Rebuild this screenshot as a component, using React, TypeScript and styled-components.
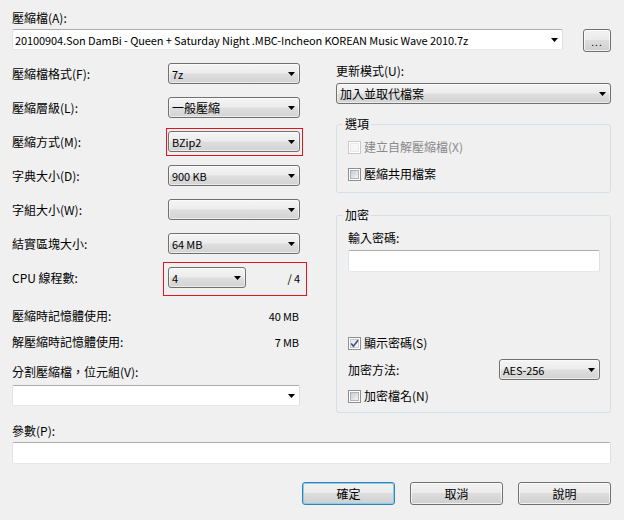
import styled, {createGlobalStyle, css} from 'styled-components';

const GlobalStyle = createGlobalStyle`
   html, body {
      margin: 0;
      padding: 0;
      background: #f0f0f0;
   }
   body {
      font-family: "Noto Sans CJK TC", "Liberation Sans", sans-serif;
      font-size: 12px;
      color: #000;
   }
   * {
      box-sizing: border-box;
   }
`;

const isLatin = (text: string) => /^[\x00-\x7f]*$/.test(text);

const Dialog = styled.div`
   width: 624px;
   height: 520px;
   padding: 10px 13px 0 12px;
   display: flex;
   flex-direction: column;
`;
const Label = styled.div<{$gap?: number}>`
   line-height: 16px;
   white-space: nowrap;
   margin-top: ${p => p.$gap ?? 0}px;
`;
const Value = styled.span<{$latin?: boolean}>`
   line-height: 16px;
   white-space: nowrap;
   ${p =>
      p.$latin &&
      css`
         font-size: 11px;
         letter-spacing: -0.1px;
      `}
`;
const ArchiveRow = styled.div`
   display: flex;
   align-items: flex-start;
   gap: 20px;
   margin-top: 3px;
`;
const Select = styled.div<{$editable?: boolean; $width?: number; $gap?: number; $grow?: boolean}>`
   height: 21px;
   flex: ${p => (p.$grow ? '1 1 auto' : 'none')};
   width: ${p => (p.$width ? `${p.$width}px` : 'auto')};
   display: flex;
   align-items: center;
   padding: 0 4px 0 3px;
   margin-top: ${p => p.$gap ?? 0}px;
   border: 1px solid #707070;
   border-radius: 3px;
   background: linear-gradient(#f5f5f5 0%, #ececec 48%, #dedede 52%, #d3d3d3 100%);
   box-shadow: inset 0 0 0 1px rgba(255, 255, 255, 0.55);
   ${p =>
      p.$editable &&
      css`
         background: #fff;
         border-color: #abadb3 #dbdfe6 #e3e9ef #e2e3ea;
         border-radius: 2px;
         box-shadow: none;
         padding-left: 2px;
      `}
`;
const SelectText = styled(Value)`
   flex: 1;
   overflow: hidden;
`;
const TextBox = styled.div<{$gap?: number}>`
   height: 22px;
   flex: none;
   margin-top: ${p => p.$gap ?? 0}px;
   background: #fff;
   border: 1px solid;
   border-color: #abadb3 #dbdfe6 #e3e9ef #e2e3ea;
   border-radius: 2px;
`;
const Button = styled.button<{$default?: boolean}>`
   font: inherit;
   color: #000;
   height: 23px;
   border: 1px solid #707070;
   border-radius: 3px;
   background: linear-gradient(#f2f2f2 0%, #ebebeb 45%, #dddddd 50%, #cfcfcf 100%);
   box-shadow: inset 0 0 0 1px rgba(255, 255, 255, 0.7);
   padding: 0;
   ${p =>
      p.$default &&
      css`
         border-color: #3c7fb1;
         box-shadow: inset 0 0 0 1px #7fd0f2;
      `}
`;
const BrowseButton = styled(Button)`
   width: 28px;
   flex: none;
   font-size: 10px;
   line-height: 10px;
   letter-spacing: 1px;
   padding-top: 3px;
`;
const Columns = styled.div`
   display: grid;
   grid-template-columns: 288px 275px;
   column-gap: 36px;
   align-items: start;
   margin-top: 11px;
`;
const Column = styled.div`
   display: flex;
   flex-direction: column;
`;
const Fields = styled.div`
   display: flex;
   flex-direction: column;
   gap: 13px;
`;
const FieldRow = styled.div`
   display: grid;
   grid-template-columns: 156px 132px;
   align-items: center;
   height: 21px;
`;
const Control = styled.div`
   display: flex;
   align-items: center;
   justify-content: space-between;
   position: relative;
`;
const Highlight = styled.div<{$inset: string}>`
   display: contents;
   & > ${Control}::after {
      content: '';
      position: absolute;
      inset: ${p => p.$inset};
      border: 1px solid #e3151c;
      pointer-events: none;
   }
`;
const InfoRow = styled.div<{$gap: number}>`
   display: flex;
   justify-content: space-between;
   align-items: center;
   line-height: 16px;
   margin-top: ${p => p.$gap}px;
   padding-right: 1px;
`;
const Group = styled.fieldset<{$gap: number; $bottom: number}>`
   margin: ${p => p.$gap}px 0 0;
   padding: 0 10px ${p => p.$bottom}px 11px;
   border: 1px solid #d5dfe5;
   border-radius: 3px;
   min-width: 0;
   display: flex;
   flex-direction: column;
`;
const Legend = styled.legend`
   padding: 0 2px;
   margin-left: -5px;
   line-height: 16px;
`;
const CheckRow = styled.label<{$gap: number; $disabled?: boolean}>`
   display: flex;
   align-items: center;
   gap: 3px;
   line-height: 16px;
   height: 16px;
   flex: none;
   margin-top: ${p => p.$gap}px;
   color: ${p => (p.$disabled ? '#8a8a8a' : '#000')};
`;
const Box = styled.span<{$disabled?: boolean}>`
   width: 13px;
   height: 13px;
   flex: none;
   padding: 1px;
   border: 1px solid ${p => (p.$disabled ? '#c9c9c9' : '#8e8f8f')};
   background: #fff;
   display: flex;
`;
const BoxFill = styled.span<{$disabled?: boolean; $checked?: boolean}>`
   flex: 1;
   display: flex;
   border: 1px solid ${p => (p.$disabled ? '#e8e8e8' : p.$checked ? '#c8ccd2' : '#aeb3b9')};
   background: ${p =>
      p.$disabled
         ? '#f7f7f7'
         : p.$checked
         ? 'linear-gradient(135deg, #e4e6ea, #fbfbfb)'
         : 'linear-gradient(135deg, #c9cdd3, #f4f4f4)'};
   position: relative;
`;
const CheckMark = styled.svg`
   position: absolute;
   left: -2px;
   top: -2px;
`;
const MethodRow = styled.div`
   display: flex;
   align-items: center;
   justify-content: space-between;
   height: 21px;
   flex: none;
   margin-top: 8px;
`;
const Footer = styled.div`
   display: flex;
   justify-content: flex-end;
   gap: 15px;
   margin-top: 18px;
   & > ${Button} {
      width: 93px;
   }
`;

const Arrow = () => (
   <svg width='7' height='4' viewBox='0 0 7 4'>
      <polygon points='0,0 7,0 3.5,4' fill='#000' />
   </svg>
);

interface DropProps {
   value?: string;
   editable?: boolean;
   width?: number;
   gap?: number;
   grow?: boolean;
}
const Drop = ({value = '', editable, width, gap, grow}: DropProps) => (
   <Select $editable={editable} $width={width} $gap={gap} $grow={grow}>
      <SelectText $latin={isLatin(value)}>{value}</SelectText>
      <Arrow />
   </Select>
);

interface CheckProps {
   label: string;
   gap: number;
   checked?: boolean;
   disabled?: boolean;
}
const Check = ({label, gap, checked, disabled}: CheckProps) => (
   <CheckRow $gap={gap} $disabled={disabled}>
      <Box $disabled={disabled}>
         <BoxFill $disabled={disabled} $checked={checked}>
            {checked && (
               <CheckMark width='11' height='11' viewBox='0 0 11 11'>
                  <path
                     d='M2.2 5.6 L4.4 8.2 L9 2.2'
                     fill='none'
                     stroke='#3d4f7d'
                     strokeWidth='1.6'
                  />
               </CheckMark>
            )}
         </BoxFill>
      </Box>
      {label}
   </CheckRow>
);

const FIELDS = [
   {label: '壓縮檔格式(F):', value: '7z'},
   {label: '壓縮層級(L):', value: '一般壓縮'},
   {label: '壓縮方式(M):', value: 'BZip2', mark: '-3px -3px -4px -2px'},
   {label: '字典大小(D):', value: '900 KB'},
   {label: '字組大小(W):', value: ''},
   {label: '結實區塊大小:', value: '64 MB'},
];

const App = () => {
   return (
      <>
         <GlobalStyle />
         <Dialog>
            <Label>壓縮檔(A):</Label>
            <ArchiveRow>
               <Drop
                  editable
                  grow
                  value='20100904.Son DamBi - Queen + Saturday Night .MBC-Incheon KOREAN Music Wave 2010.7z'
               />
               <BrowseButton>...</BrowseButton>
            </ArchiveRow>

            <Columns>
               <Column>
                  <Fields>
                     {FIELDS.map(field => {
                        const control = (
                           <Control>
                              <Drop value={field.value} width={132} />
                           </Control>
                        );
                        return (
                           <FieldRow key={field.label}>
                              <Label>{field.label}</Label>
                              {field.mark ? (
                                 <Highlight $inset={field.mark}>{control}</Highlight>
                              ) : (
                                 control
                              )}
                           </FieldRow>
                        );
                     })}
                     <FieldRow>
                        <Label>CPU 線程數:</Label>
                        <Highlight $inset='-5px -7px -8px -5px'>
                           <Control>
                              <Drop value='4' width={78} />
                              <Value $latin>/ 4</Value>
                           </Control>
                        </Highlight>
                     </FieldRow>
                  </Fields>
                  <InfoRow $gap={20}>
                     <span>壓縮時記憶體使用:</span>
                     <Value $latin>40 MB</Value>
                  </InfoRow>
                  <InfoRow $gap={10}>
                     <span>解壓縮時記憶體使用:</span>
                     <Value $latin>7 MB</Value>
                  </InfoRow>
                  <Label $gap={14}>分割壓縮檔，位元組(V):</Label>
                  <Drop editable gap={5} />
               </Column>

               <Column>
                  <Label>更新模式(U):</Label>
                  <Drop value='加入並取代檔案' gap={4} />
                  <Group $gap={12} $bottom={10}>
                     <Legend>選項</Legend>
                     <Check label='建立自解壓縮檔(X)' gap={7} disabled />
                     <Check label='壓縮共用檔案' gap={11} />
                  </Group>
                  <Group $gap={14} $bottom={8}>
                     <Legend>加密</Legend>
                     <Label $gap={7}>輸入密碼:</Label>
                     <TextBox $gap={4} />
                     <Check label='顯示密碼(S)' gap={63} checked />
                     <MethodRow>
                        <span>加密方法:</span>
                        <Drop value='AES-256' width={101} />
                     </MethodRow>
                     <Check label='加密檔名(N)' gap={8} />
                  </Group>
               </Column>
            </Columns>

            <Label $gap={10}>參數(P):</Label>
            <TextBox $gap={3} />
            <Footer>
               <Button $default>確定</Button>
               <Button>取消</Button>
               <Button>說明</Button>
            </Footer>
         </Dialog>
      </>
   );
};
export default App;
